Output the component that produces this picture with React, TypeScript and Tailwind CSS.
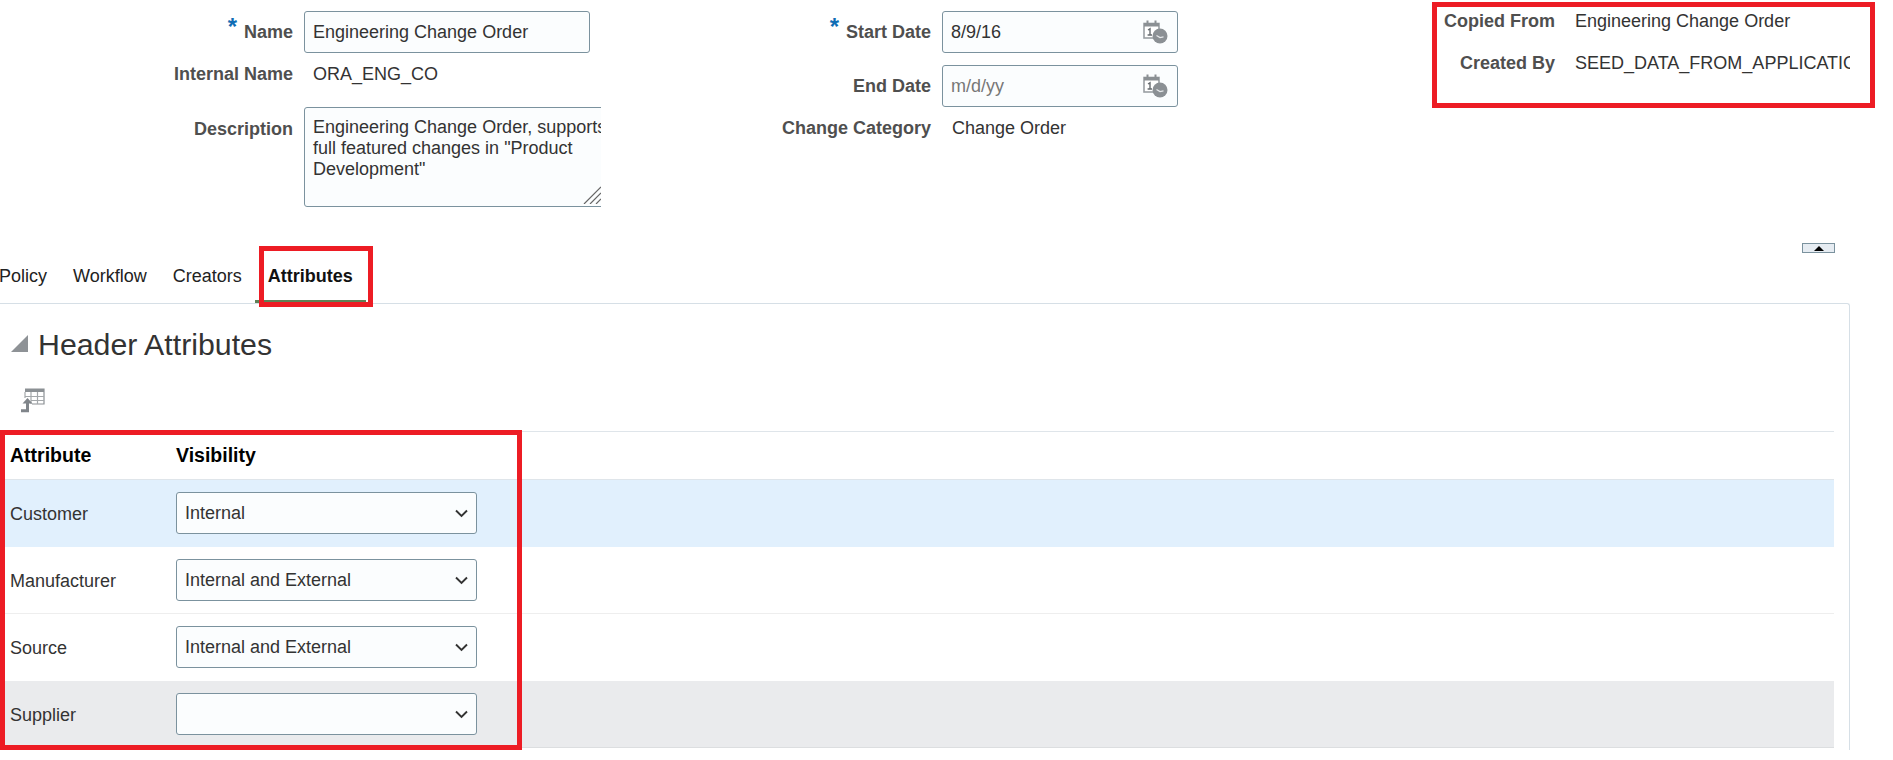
const font = "font-['Liberation_Sans',Arial,sans-serif]";

function CalendarIcon() {
  return (
    <svg width="25" height="24" viewBox="0 0 25 24" className="absolute right-[10px] top-[9px]">
      <rect x="1" y="3.5" width="15" height="14.5" fill="#fff" stroke="#9a9fa3" strokeWidth="1.6" />
      <rect x="1" y="3" width="15" height="3.5" fill="#8b9094" />
      <rect x="3.5" y="0.5" width="2" height="4" fill="#8b9094" />
      <rect x="11.5" y="0.5" width="2" height="4" fill="#8b9094" />
      <path d="M5 10 l2-1.2 V15 M4.6 15 h4.4" fill="none" stroke="#666b6f" strokeWidth="1.4" />
      <circle cx="17" cy="16" r="7.5" fill="#8b9094" />
      <path d="M13.5 15.5 l3.5 2 l3.5-0.6" fill="none" stroke="#e8eaec" strokeWidth="1.2" />
    </svg>
  );
}

function DateField({ value, placeholder }: { value?: string; placeholder?: string }) {
  return (
    <div className="relative w-[236px] h-[42px]">
      <input
        readOnly
        value={value ?? ""}
        placeholder={placeholder}
        className="w-full h-full pl-2 border border-[#7b929e] rounded-[3px] bg-[#fbfdfe] text-[18px] text-[#333] placeholder:text-[#777] outline-none"
      />
      <CalendarIcon />
    </div>
  );
}

function Label({ children, required }: { children: string; required?: boolean }) {
  return (
    <span className="font-bold text-[18px] text-[#4f4f4f] whitespace-nowrap">
      {required && <span className="text-[#0f6db5] text-[24px] leading-none mr-[7px] relative top-[-3px]">*</span>}
      {children}
    </span>
  );
}

function AttributeRow({ name, value, bg }: { name: string; value: string; bg: string }) {
  return (
    <div className={`flex items-center h-[67px] border-b ${bg}`}>
      <span className="w-[176px] pl-[10px] pt-[2px] text-[18px] text-[#333]">{name}</span>
      <div className="relative w-[301px] h-[42px]">
        <select
          value={value}
          onChange={() => {}}
          className="appearance-none w-full h-full pl-2 border border-[#7b929e] rounded-[3px] bg-[#fbfdfe] text-[18px] text-[#333] outline-none"
        >
          <option value=""></option>
          <option value="Internal">Internal</option>
          <option value="Internal and External">Internal and External</option>
        </select>
        <svg width="13" height="9" viewBox="0 0 13 9" className="absolute right-[9px] top-[17px] pointer-events-none">
          <path d="M1 1.5 L6.5 7 L12 1.5" fill="none" stroke="#333" strokeWidth="1.9" />
        </svg>
      </div>
    </div>
  );
}

export default function App() {
  return (
    <div className={`relative h-[760px] w-full overflow-hidden bg-white ${font}`}>
      {/* Form */}
      <div className="flex h-[207px] pt-[11px]">
        <div className="w-[601px] shrink-0">
          <div className="flex items-center h-[42px]">
            <div className="w-[293px] text-right mr-[11px]"><Label required>Name</Label></div>
            <input
              readOnly
              value="Engineering Change Order"
              className="w-[286px] h-full pl-2 border border-[#7b929e] rounded-[3px] bg-[#fbfdfe] text-[18px] text-[#333] outline-none"
            />
          </div>
          <div className="flex items-center h-[42px]">
            <div className="w-[293px] text-right mr-[20px]"><Label>Internal Name</Label></div>
            <span className="text-[18px] text-[#333]">ORA_ENG_CO</span>
          </div>
          <div className="flex mt-[12px]">
            <div className="w-[293px] text-right mr-[11px] pt-[9px]"><Label>Description</Label></div>
            <div className="relative w-[297px] h-[100px] overflow-hidden">
              <textarea
                readOnly
                wrap="off"
                value={'Engineering Change Order, supports\nfull featured changes in "Product\nDevelopment"'}
                className="block w-[340px] h-full pl-2 pt-[9px] border border-[#7b929e] rounded-[3px] bg-[#fbfdfe] text-[18px] leading-[21px] text-[#333] resize-none overflow-hidden outline-none"
              />
              <svg width="18" height="18" viewBox="0 0 18 18" className="absolute right-0 bottom-[3px]">
                <path d="M1 18 L18 1 M7 18 L18 7 M13 18 L18 13" stroke="#666" strokeWidth="1.2" />
              </svg>
            </div>
          </div>
        </div>

        <div className="w-[577px] shrink-0">
          <div className="flex items-center h-[42px]">
            <div className="w-[330px] text-right mr-[11px]"><Label required>Start Date</Label></div>
            <DateField value="8/9/16" />
          </div>
          <div className="flex items-center h-[42px] mt-[12px]">
            <div className="w-[330px] text-right mr-[11px]"><Label>End Date</Label></div>
            <DateField placeholder="m/d/yy" />
          </div>
          <div className="flex items-center h-[42px]">
            <div className="w-[330px] text-right mr-[21px]"><Label>Change Category</Label></div>
            <span className="text-[18px] text-[#333]">Change Order</span>
          </div>
        </div>

        <div className="flex-1 min-w-0 -mt-[11px]">
          <div className="flex items-center h-[42px]">
            <div className="w-[377px] text-right mr-[20px]"><Label>Copied From</Label></div>
            <span className="text-[18px] text-[#333]">Engineering Change Order</span>
          </div>
          <div className="flex items-center h-[42px]">
            <div className="w-[377px] text-right mr-[20px]"><Label>Created By</Label></div>
            <span className="w-[275px] overflow-hidden whitespace-nowrap text-[18px] text-[#333]">SEED_DATA_FROM_APPLICATION</span>
          </div>
        </div>
      </div>

      {/* Splitter handle */}
      <div className="flex justify-end pt-[36px] pr-[58px] h-[46px]">
        <div className="flex items-center justify-center w-[33px] h-[10px] border border-[#7b929e] bg-[#e6ecf2]">
          <div className="w-0 h-0 border-x-[5px] border-x-transparent border-b-[5px] border-b-black" />
        </div>
      </div>

      {/* Tabs */}
      <div className="flex h-[50px] -ml-[1px] text-[18px] text-[#222]">
        <div className="flex items-center pr-[13px] border-b-[3px] border-transparent">Policy</div>
        <div className="flex items-center px-[13px] border-b-[3px] border-transparent">Workflow</div>
        <div className="flex items-center px-[13px] border-b-[3px] border-transparent">Creators</div>
        <div className="flex items-center px-[13px] border-b-[3px] border-[#5f8156] font-bold text-[#111]">Attributes</div>
      </div>

      {/* Panel */}
      <div className="w-[1850px] h-[447px] border-t border-r border-[#d6dfe6] rounded-tr-[3px]">
        <div className="flex items-center h-[80px] pt-[2px] pl-[11px]">
          <svg width="17" height="17" viewBox="0 0 17 17" className="mr-[10px] -mt-[3px]">
            <path d="M0 17 H17 V0 Z" fill="#8e9296" />
          </svg>
          <h2 className="text-[30.3px] text-[#333]">Header Attributes</h2>
        </div>
        <div className="h-[47px] pl-[21px] pt-[4px]">
          <svg width="24" height="25" viewBox="0 0 24 25">
            <path d="M4 1 H23 V16 H11" fill="none" stroke="#8b9094" strokeWidth="1.2" />
            <rect x="4" y="1" width="19" height="3" fill="#8b9094" />
            <path d="M4 8.5 H23 M10 12.5 H23 M10 4 V16 M16.5 4 V16 M4 4 V10" fill="none" stroke="#a4a8ab" strokeWidth="1.2" />
            <path d="M0 22.8 H6.5 V14" fill="none" stroke="#80858a" strokeWidth="3" />
            <path d="M1.5 15.5 L6.5 10 L11.5 15.5 Z" fill="#80858a" />
          </svg>
        </div>

        {/* Table */}
        <div className="w-[1834px] border-t border-[#dfe5ea]">
          <div className="flex items-center h-[48px] border-b border-[#dfe5ea] font-bold text-[19.5px] text-black">
            <span className="w-[176px] pl-[10px]">Attribute</span>
            <span>Visibility</span>
          </div>
          <AttributeRow name="Customer" value="Internal" bg="bg-[#e1f0fd] border-[#e1f0fd]" />
          <AttributeRow name="Manufacturer" value="Internal and External" bg="border-[#eeeeee]" />
          <AttributeRow name="Source" value="Internal and External" bg="border-[#ffffff]" />
          <AttributeRow name="Supplier" value="" bg="bg-[#eaebed] border-[#dcdee0]" />
        </div>
      </div>

      {/* Red annotation boxes */}
      <div className="absolute left-[1432px] top-[2px] w-[443px] h-[106px] border-[5px] border-[#ed1c24] pointer-events-none" />
      <div className="absolute left-[259px] top-[246px] w-[114px] h-[61px] border-[5px] border-[#ed1c24] pointer-events-none" />
      <div className="absolute left-0 top-[430px] w-[522px] h-[320px] border-[5px] border-[#ed1c24] pointer-events-none" />
    </div>
  );
}
